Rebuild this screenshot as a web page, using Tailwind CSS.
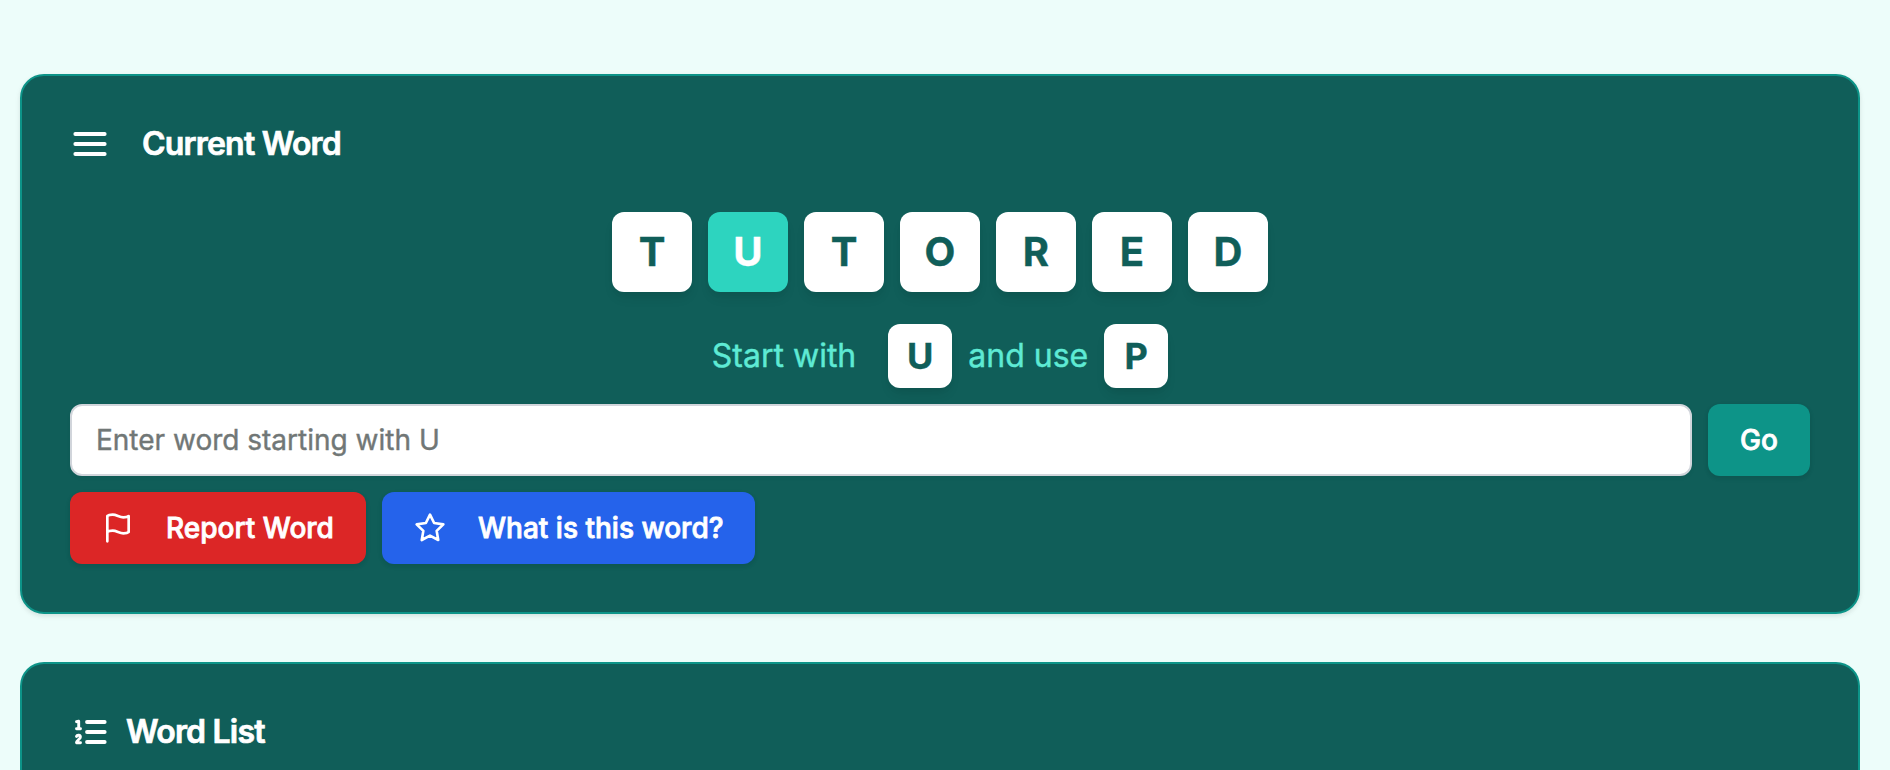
<!DOCTYPE html>
<html lang="en">
<head>
  <meta charset="UTF-8" />
  <meta name="viewport" content="width=device-width, initial-scale=1.0" />
  <title>Word Game</title>

  <!-- Tailwind CSS for styling -->
  <script src="https://cdn.jsdelivr.net/npm/@tailwindcss/browser@4"></script>
</head>

<body class="bg-[#edfdfa] font-[Inter,sans-serif] [-webkit-text-stroke:0.4px]">

  <main class="h-screen ml-5 mr-[30px] pt-[74px] flex flex-col gap-12">

    <!-- Current word -->
    <section class="h-[540px] shrink-0 rounded-3xl border-2 border-[#0d9488] bg-[#105e59] p-12 shadow-[0_2px_4px_rgba(0,0,0,0.06),0_2px_6px_rgba(0,0,0,0.06)]">
      <header class="flex items-center h-10 mb-12 text-white">
        <svg class="w-10 h-10 mr-8" viewBox="0 0 40 40" fill="none" stroke="currentColor" stroke-width="3.8" stroke-linecap="round">
          <path d="M5.3 10h29.4M5.3 20h29.4M5.3 30h29.4" />
        </svg>
        <h2 class="text-[32px] leading-10 font-semibold tracking-tight [-webkit-text-stroke:0.7px]">Current Word</h2>
      </header>

      <div class="flex justify-center gap-4 mb-8 text-[40px] font-bold text-[#105e59]">
        <div class="size-20 flex items-center justify-center rounded-xl bg-white shadow-[0_8px_12px_-2px_rgba(0,0,0,0.07),0_4px_8px_-4px_rgba(0,0,0,0.07)]">T</div>
        <div class="size-20 flex items-center justify-center rounded-xl bg-[#2dd4bf] text-white shadow-[0_8px_12px_-2px_rgba(0,0,0,0.07),0_4px_8px_-4px_rgba(0,0,0,0.07)]">U</div>
        <div class="size-20 flex items-center justify-center rounded-xl bg-white shadow-[0_8px_12px_-2px_rgba(0,0,0,0.07),0_4px_8px_-4px_rgba(0,0,0,0.07)]">T</div>
        <div class="size-20 flex items-center justify-center rounded-xl bg-white shadow-[0_8px_12px_-2px_rgba(0,0,0,0.07),0_4px_8px_-4px_rgba(0,0,0,0.07)]">O</div>
        <div class="size-20 flex items-center justify-center rounded-xl bg-white shadow-[0_8px_12px_-2px_rgba(0,0,0,0.07),0_4px_8px_-4px_rgba(0,0,0,0.07)]">R</div>
        <div class="size-20 flex items-center justify-center rounded-xl bg-white shadow-[0_8px_12px_-2px_rgba(0,0,0,0.07),0_4px_8px_-4px_rgba(0,0,0,0.07)]">E</div>
        <div class="size-20 flex items-center justify-center rounded-xl bg-white shadow-[0_8px_12px_-2px_rgba(0,0,0,0.07),0_4px_8px_-4px_rgba(0,0,0,0.07)]">D</div>
      </div>

      <!-- Hint -->
      <div class="flex items-center justify-center gap-4 mb-4 text-[32px] text-[#5eead4]">
        <span class="mr-4">Start with</span>
        <div class="size-16 flex items-center justify-center rounded-xl bg-white text-4xl font-bold text-[#105e59] shadow-[0_8px_12px_-2px_rgba(0,0,0,0.07),0_4px_8px_-4px_rgba(0,0,0,0.07)]">U</div>
        <span>and use</span>
        <div class="size-16 flex items-center justify-center rounded-xl bg-white text-4xl font-bold text-[#105e59] shadow-[0_8px_12px_-2px_rgba(0,0,0,0.07),0_4px_8px_-4px_rgba(0,0,0,0.07)]">P</div>
      </div>

      <!-- Word entry -->
      <form class="flex gap-4 mb-4 text-[28px]">
        <input type="text" placeholder="Enter word starting with U" class="flex-1 h-[72px] rounded-xl border-2 border-[#d1d5db] bg-white px-6 placeholder:text-[#717776] shadow-[0_2px_4px_rgba(0,0,0,0.05)]" />
        <button type="button" class="w-[102px] h-[72px] rounded-xl bg-[#0d9488] font-medium text-white [-webkit-text-stroke:0.8px] shadow-[0_2px_4px_rgba(0,0,0,0.06),0_2px_6px_rgba(0,0,0,0.05)]">Go</button>
      </form>

      <!-- Actions -->
      <div class="flex gap-4 text-[28px] font-medium text-white [-webkit-text-stroke:0.8px]">
        <button class="w-[296px] h-[72px] pl-8 flex items-center rounded-xl bg-[#dc2626] shadow-[0_2px_4px_rgba(0,0,0,0.06),0_2px_6px_rgba(0,0,0,0.05)]">
          <svg class="w-8 h-8 mr-8" viewBox="0 0 24 24" fill="none" stroke="currentColor" stroke-width="2" stroke-linecap="round" stroke-linejoin="round">
            <path d="M4 15s1-1 4-1 5 2 8 2 4-1 4-1V3s-1 1-4 1-5-2-8-2-4 1-4 1zM4 22v-7" />
          </svg>
          <span class="whitespace-nowrap">Report Word</span>
        </button>
        <button class="w-[373px] h-[72px] pl-8 flex items-center rounded-xl bg-[#2563eb] shadow-[0_2px_4px_rgba(0,0,0,0.06),0_2px_6px_rgba(0,0,0,0.05)]">
          <svg class="w-8 h-8 mr-8" viewBox="0 0 24 24" fill="none" stroke="currentColor" stroke-width="2" stroke-linecap="round" stroke-linejoin="round">
            <path d="M12 2l3.09 6.26L22 9.27l-5 4.87 1.18 6.88L12 17.77l-6.18 3.25L7 14.14 2 9.27l6.91-1.01z" />
          </svg>
          <span class="whitespace-nowrap">What is this word?</span>
        </button>
      </div>
    </section>

    <!-- Word list -->
    <section class="flex-1 min-h-0 rounded-t-3xl border-2 border-b-0 border-[#0d9488] bg-[#105e59] px-12 pt-12">
      <header class="flex items-center h-10 text-white">
        <svg class="w-10 h-10 mr-4" viewBox="0 0 40 40" fill="none" stroke="currentColor" stroke-linecap="round" stroke-linejoin="round">
          <path stroke-width="3.8" d="M17 10h17.7M17 20h17.7M17 30h17.7" />
          <path stroke-width="2.9" d="M6.5 9.7l2.2-.5v7.5M6.5 16.8h4M6.5 24.4c.7-1.7 3.9-1.4 3.9.6 0 1.9-3.6 3.2-3.9 5.7h4" />
        </svg>
        <h2 class="text-[32px] leading-10 font-semibold tracking-tight [-webkit-text-stroke:0.7px]">Word List</h2>
      </header>
    </section>

  </main>

</body>
</html>
